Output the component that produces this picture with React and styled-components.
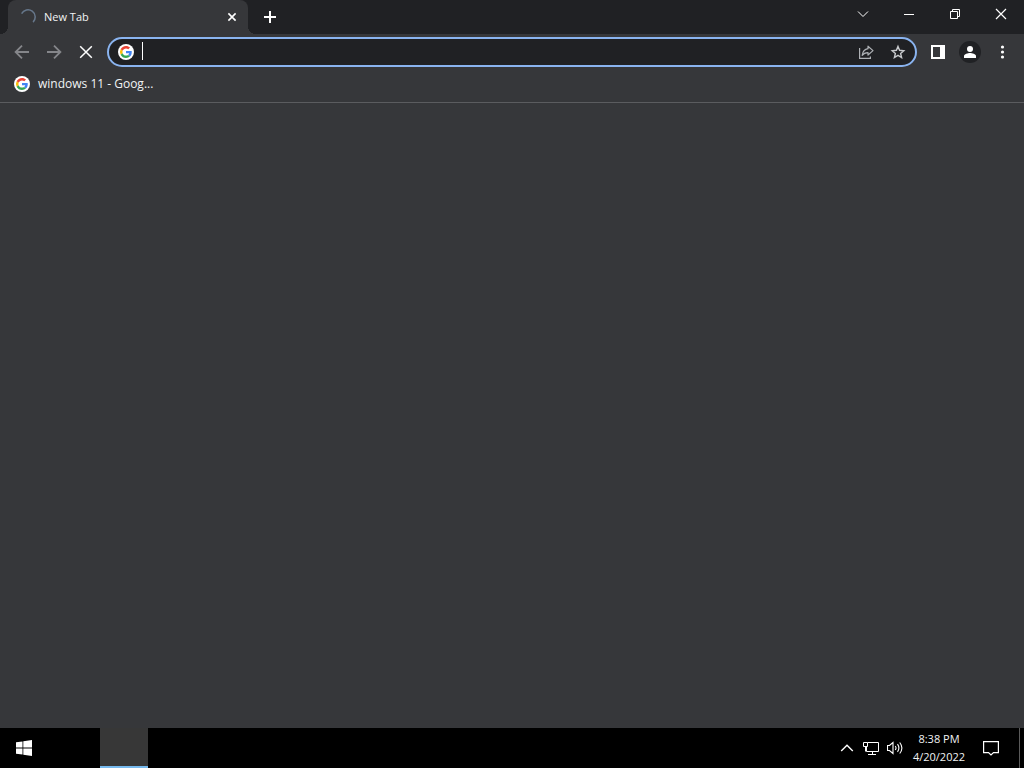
import React from "react";
import styled, { createGlobalStyle } from "styled-components";

const GlobalStyle = createGlobalStyle`
  *, *::before, *::after { box-sizing: border-box; }
  body { margin: 0; background: #36373a; }
  button, input { font: inherit; color: inherit; }
`;

const Screen = styled.div`
  min-height: 100vh;
  display: flex;
  flex-direction: column;
  background: #36373a;
  color: #f1f3f4;
  font: 11px/16px "Open Sans", "Noto Sans", sans-serif;
`;

const Button = styled.button`
  display: flex;
  align-items: center;
  justify-content: center;
  flex: none;
  width: ${(p) => p.$width || 32}px;
  height: ${(p) => p.$height || 28}px;
  padding: 0;
  border: 0;
  background: transparent;
  color: ${(p) => p.$color || "#fff"};
`;

const TabStrip = styled.header`
  display: flex;
  height: 34px;
  padding-left: 8px;
  background: #202124;
`;

const Tab = styled.div`
  position: relative;
  display: flex;
  align-items: center;
  flex: 0 1 240px;
  min-width: 0;
  padding: 0 4px 0 12px;
  gap: 8px;
  border-radius: 8px 8px 0 0;
  background: #36373a;

  &::before,
  &::after {
    content: "";
    position: absolute;
    bottom: 0;
    width: 8px;
    height: 8px;
  }
  &::before {
    right: 100%;
    background: radial-gradient(circle at 0 0, #202124 8px, #36373a 8px);
  }
  &::after {
    left: 100%;
    background: radial-gradient(circle at 100% 0, #202124 8px, #36373a 8px);
  }
`;

const TabTitle = styled.span`
  flex: 1;
  min-width: 0;
  overflow: hidden;
  white-space: nowrap;
`;

const NewTabSlot = styled.div`
  display: flex;
  align-items: center;
  flex: 1;
  padding-left: 8px;
`;

const WindowControls = styled.div`
  display: flex;
`;

const Toolbar = styled.nav`
  display: flex;
  align-items: center;
  height: 36px;
  padding: 0 6px;
`;

const Omnibox = styled.div`
  display: flex;
  align-items: center;
  flex: 1;
  min-width: 0;
  height: 30px;
  margin: 0 5px;
  padding: 0 1px 0 9px;
  border: 2px solid #8ab4f0;
  border-radius: 15px;
  background: #202124;
`;

const Caret = styled.span`
  flex: none;
  width: 1px;
  height: 18px;
  margin: 0 0 2px 8px;
  background: #fff;
`;

const AddressInput = styled.input`
  flex: 1;
  min-width: 0;
  padding: 0;
  border: 0;
  outline: 0;
  background: transparent;
`;

const Avatar = styled.span`
  display: flex;
  align-items: center;
  justify-content: center;
  width: 22px;
  height: 22px;
  border-radius: 50%;
  background: #202124;
`;

const Bookmarks = styled.div`
  display: flex;
  height: 33px;
  padding: 6px 14px;
  border-bottom: 1px solid #5b5c5f;
`;

const Bookmark = styled.a`
  display: flex;
  align-items: center;
  gap: 8px;
  height: 16px;
  color: inherit;
  font-size: 12px;
  text-decoration: none;
`;

const Page = styled.main`
  flex: 1;
`;

const Taskbar = styled.footer`
  display: flex;
  height: 40px;
  background: #000;
`;

const TaskButton = styled.button`
  width: 48px;
  height: 40px;
  margin-left: 52px;
  padding: 0;
  border: 0;
  border-bottom: 2px solid #76b9ed;
  background: #373737;
`;

const Tray = styled.div`
  display: flex;
  margin-left: auto;
`;

const Clock = styled.div`
  width: 64px;
  padding: 2px 0;
  line-height: 18px;
  text-align: center;
`;

const ShowDesktop = styled.button`
  width: 5px;
  height: 40px;
  margin-left: 8px;
  padding: 0;
  border: 0;
  border-left: 1px solid #5a5a5a;
  background: transparent;
`;

const Icon = ({ size = 16, children, ...rest }) => (
  <svg
    width={size}
    height={size}
    viewBox={`0 0 ${size} ${size}`}
    fill="none"
    stroke="currentColor"
    aria-hidden="true"
    {...rest}
  >
    {children}
  </svg>
);

const GoogleIcon = () => (
  <Icon stroke="none">
    <circle cx="8" cy="8" r="8" fill="#fff" />
    <g transform="translate(2 2) scale(.25)">
      <path fill="#EA4335" d="M24 9.5c3.54 0 6.71 1.22 9.21 3.6l6.85-6.85C35.9 2.38 30.47 0 24 0 14.62 0 6.51 5.38 2.56 13.22l7.98 6.19C12.43 13.72 17.74 9.5 24 9.5z" />
      <path fill="#4285F4" d="M46.98 24.55c0-1.57-.15-3.09-.38-4.55H24v9.02h12.94c-.58 2.96-2.26 5.48-4.78 7.18l7.73 6c4.51-4.18 7.09-10.36 7.09-17.65z" />
      <path fill="#FBBC05" d="M10.53 28.59a14.5 14.5 0 0 1 0-9.18l-7.98-6.19a24 24 0 0 0 0 21.56l7.98-6.19z" />
      <path fill="#34A853" d="M24 48c6.48 0 11.93-2.13 15.89-5.81l-7.73-6c-2.15 1.45-4.92 2.3-8.16 2.3-6.26 0-11.57-4.22-13.47-9.91l-7.98 6.19C6.51 42.62 14.62 48 24 48z" />
    </g>
  </Icon>
);

export default function App() {
  return (
    <Screen>
      <GlobalStyle />
      <TabStrip>
        <Tab>
          <Icon stroke="#66778b" strokeWidth="1.5">
            <path d="M1.6 4.7A7.2 7.2 0 1 1 13.1 13.1" />
          </Icon>
          <TabTitle>New Tab</TabTitle>
          <Button $width={24} $height={24} aria-label="Close tab">
            <Icon strokeWidth="1.6">
              <path d="M4.4 4.4l7.2 7.2M11.6 4.4l-7.2 7.2" />
            </Icon>
          </Button>
        </Tab>
        <NewTabSlot>
          <Button $width={28} aria-label="New tab">
            <Icon strokeWidth="2">
              <path d="M8 2v12M2 8h12" />
            </Icon>
          </Button>
        </NewTabSlot>
        <WindowControls>
          <Button $width={46} aria-label="Search tabs">
            <Icon>
              <path d="M3 5.5l5 5 5-5" />
            </Icon>
          </Button>
          <Button $width={46} aria-label="Minimize">
            <Icon>
              <path d="M3 8.5h10" />
            </Icon>
          </Button>
          <Button $width={46} aria-label="Restore">
            <Icon>
              <path d="M3.5 5.5h7v7h-7zM5.5 5.5v-2h7v7h-2" />
            </Icon>
          </Button>
          <Button $width={46} aria-label="Close">
            <Icon strokeWidth="1.2">
              <path d="M3 3l10 10M13 3L3 13" />
            </Icon>
          </Button>
        </WindowControls>
      </TabStrip>

      <Toolbar>
        <Button $color="#85868a" aria-label="Back">
          <Icon strokeWidth="1.8">
            <path d="M15 8H2M8 1.6L1.6 8 8 14.4" />
          </Icon>
        </Button>
        <Button $color="#85868a" aria-label="Forward">
          <Icon strokeWidth="1.8">
            <path d="M1 8h13M8 1.6L14.4 8 8 14.4" />
          </Icon>
        </Button>
        <Button aria-label="Stop loading">
          <Icon strokeWidth="1.5">
            <path d="M2.2 2.2l11.6 11.6M13.8 2.2L2.2 13.8" />
          </Icon>
        </Button>
        <Omnibox>
          <GoogleIcon />
          <Caret />
          <AddressInput type="text" aria-label="Search or enter address" />
          <Button $height={26} $color="#aeb1b5" aria-label="Share">
            <Icon strokeWidth="1.2">
              <path d="M1.6 4v10.4h10.8V12.5" />
              <path d="M10 2.2l5 4.4-5 4.4V8.6C7.3 8.6 5.5 9.4 4.2 11.4 4.6 7.9 6.5 5.2 10 4.7z" strokeLinejoin="round" />
            </Icon>
          </Button>
          <Button $height={26} $color="#c8cacd" aria-label="Bookmark this tab">
            <Icon strokeWidth="1.4">
              <path d="M8 2.4l1.6 3.9 4.2.4-3.2 2.8 1 4.1L8 11.4l-3.6 2.2 1-4.1-3.2-2.8 4.2-.4z" />
            </Icon>
          </Button>
        </Omnibox>
        <Button aria-label="Side panel">
          <Icon strokeWidth="2">
            <path d="M2 2h12v12H2z" />
            <path d="M10 1h5v14h-5z" fill="currentColor" stroke="none" />
          </Icon>
        </Button>
        <Button aria-label="Profile">
          <Avatar>
            <Icon stroke="none" fill="currentColor">
              <circle cx="8" cy="5" r="3" />
              <path d="M2 14v-2c0-2 4-3 6-3s6 1 6 3v2z" />
            </Icon>
          </Avatar>
        </Button>
        <Button aria-label="Menu">
          <Icon stroke="none" fill="currentColor">
            <circle cx="8.5" cy="3" r="1.6" />
            <circle cx="8.5" cy="8" r="1.6" />
            <circle cx="8.5" cy="13" r="1.6" />
          </Icon>
        </Button>
      </Toolbar>

      <Bookmarks>
        <Bookmark href="#">
          <GoogleIcon />
          windows 11 - Goog...
        </Bookmark>
      </Bookmarks>

      <Page />

      <Taskbar>
        <Button $width={48} $height={40} aria-label="Start">
          <Icon stroke="none" fill="#fff">
            <path d="M0 2.3L6.5 1.4v6.1H0zM7.3 1.3L16 0v7.5H7.3zM0 8.4h6.5v6.2L0 13.7zM7.3 8.4H16V16l-8.7-1.3z" />
          </Icon>
        </Button>
        <TaskButton aria-label="Chrome" />
        <Tray>
          <Button $width={24} $height={40} aria-label="Show hidden icons">
            <Icon strokeWidth="1.4">
              <path d="M2.2 11L8 5.2l5.8 5.8" />
            </Icon>
          </Button>
          <Button $width={24} $height={40} aria-label="Network">
            <Icon>
              <path d="M4.5 2.5h11v9h-12v-5M.5 2.5h4v4h-4zM2.5 6.5v5M9.5 11.5v3M5 14.5h8" />
            </Icon>
          </Button>
          <Button $width={24} $height={40} aria-label="Volume">
            <Icon strokeWidth="1.1">
              <path d="M.5 5.5h2l3.5-3v11l-3.5-3h-2zM8.3 6q1.4 2 0 4M10.5 4.2q2.8 3.8 0 7.6M12.7 2.5q4.4 5.5 0 11" />
            </Icon>
          </Button>
          <Clock>
            <div>8:38 PM</div>
            <div>4/20/2022</div>
          </Clock>
          <Button $width={40} $height={40} aria-label="Notifications">
            <Icon strokeWidth="1.2">
              <path d="M.6 1.6h14.8v11H10.5L8 15l-2.5-2.4H.6z" />
            </Icon>
          </Button>
          <ShowDesktop aria-label="Show desktop" />
        </Tray>
      </Taskbar>
    </Screen>
  );
}
